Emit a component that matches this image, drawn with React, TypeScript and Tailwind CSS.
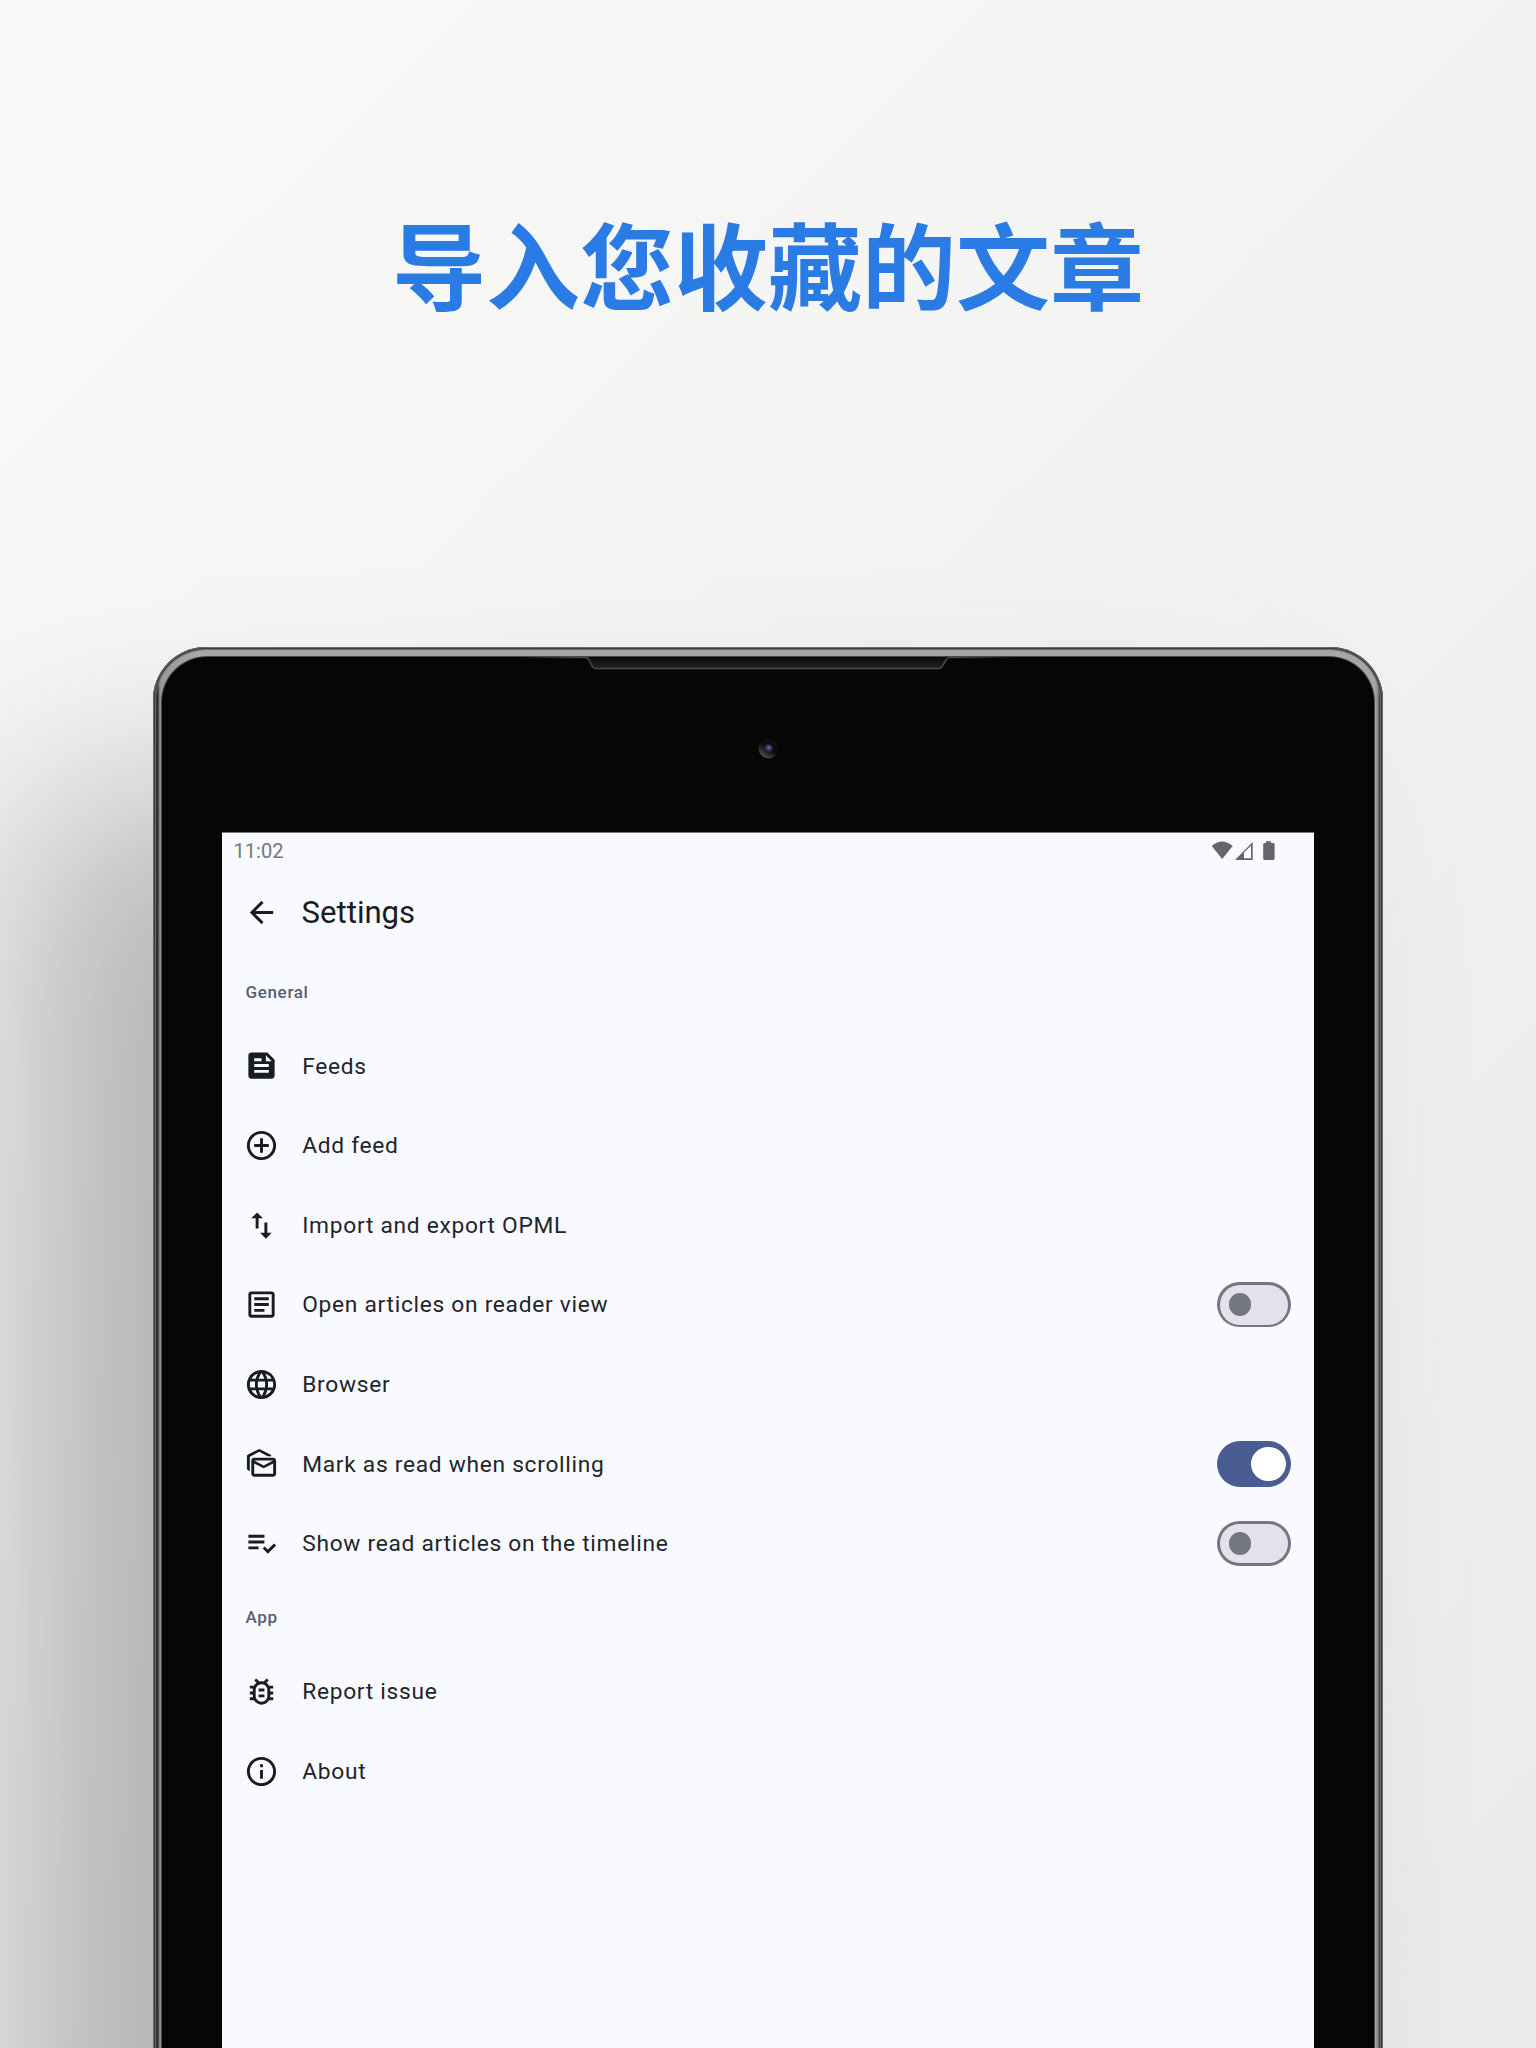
import type { ReactNode } from "react";
import {
  MdArrowBack,
  MdFeed,
  MdAddCircleOutline,
  MdImportExport,
  MdOutlineArticle,
  MdLanguage,
  MdOutlineMarkAsUnread,
  MdPlaylistAddCheck,
  MdOutlineBugReport,
  MdOutlineInfo,
} from "react-icons/md";

type Item = { icon: ReactNode; label: string; toggle?: boolean };

const iconClass = "size-[35px] shrink-0";

const general: Item[] = [
  { icon: <MdFeed className={iconClass} />, label: "Feeds" },
  { icon: <MdAddCircleOutline className={iconClass} />, label: "Add feed" },
  { icon: <MdImportExport className={iconClass} />, label: "Import and export OPML" },
  { icon: <MdOutlineArticle className={iconClass} />, label: "Open articles on reader view", toggle: false },
  { icon: <MdLanguage className={iconClass} />, label: "Browser" },
  { icon: <MdOutlineMarkAsUnread className={iconClass} />, label: "Mark as read when scrolling", toggle: true },
  { icon: <MdPlaylistAddCheck className={iconClass} />, label: "Show read articles on the timeline", toggle: false },
];

const app: Item[] = [
  { icon: <MdOutlineBugReport className={iconClass} />, label: "Report issue" },
  { icon: <MdOutlineInfo className={iconClass} />, label: "About" },
];

function Toggle({ on }: { on: boolean }) {
  return on ? (
    <div className="flex h-[45.5px] w-[74px] items-center justify-end rounded-full bg-[#495d92] pr-[5.7px]">
      <div className="size-[34.1px] rounded-full bg-white" />
    </div>
  ) : (
    <div className="flex h-[45.5px] w-[74px] items-center rounded-full bg-[#757780] p-[2.84px]">
      <div className="flex h-full w-full items-center rounded-full bg-[#e2e2ec] pl-[8.5px]">
        <div className="size-[22.75px] rounded-full bg-[#757780]" />
      </div>
    </div>
  );
}

function Section({ title, items }: { title: string; items: Item[] }) {
  return (
    <section>
      <h2 className="flex h-[68.27px] items-center pt-[1.4px] pl-[23.5px] text-[17.07px] font-medium tracking-[0.62px] text-[#585e71]">
        {title}
      </h2>
      {items.map((item) => (
        <div key={item.label} className="flex h-[79.64px] items-center pr-[22.8px] pl-[22.1px]">
          {item.icon}
          <span className="ml-[23.1px] flex-1 pt-[1.6px] text-[22.75px] tracking-[0.71px] text-[#22242b]">{item.label}</span>
          {item.toggle !== undefined && <Toggle on={item.toggle} />}
        </div>
      ))}
    </section>
  );
}

function StatusIcons() {
  return (
    <svg className="mt-px" width="66" height="22" viewBox="0 0 66 22" fill="#666669">
      <path d="M0.7 6 Q11 -3 21.7 6 L11.2 19 Z" />
      <path fillRule="evenodd" d="M24 20 L41.7 2 V20 Z M33 12.6 V18.3 H40 V5.8 Z" />
      <path d="M55 1.3 h5 v1.7 h2.2 q1.4 0 1.4 1.4 v14 q0 1.6 -1.4 1.6 h-8.4 q-1.6 0 -1.6 -1.6 v-14 q0 -1.4 1.4 -1.4 h1.4 z" />
    </svg>
  );
}

function Speaker() {
  return (
    <svg className="absolute top-[8px] left-[368px]" width="492" height="16" viewBox="0 0 492 16" fill="none">
      <defs>
        <linearGradient id="slot" x1="0" y1="0" x2="0" y2="1">
          <stop offset="0" stopColor="#0a0a0a" />
          <stop offset="1" stopColor="#222222" />
        </linearGradient>
        <linearGradient id="lip" x1="0" x2="1" y1="0" y2="0">
          <stop offset="0" stopColor="#555555" stopOpacity="0" />
          <stop offset="0.12" stopColor="#4a4a4a" />
          <stop offset="0.88" stopColor="#4a4a4a" />
          <stop offset="1" stopColor="#555555" stopOpacity="0" />
        </linearGradient>
      </defs>
      <path d="M66 2 L72 13 H420 L426 2 Z" fill="url(#slot)" />
      <path
        d="M0 2.5 H64 Q67 2.5 68 5 L71 11 Q72 13.4 74 13.4 H418 Q420 13.4 421.5 11 L425 5 Q426.5 2.5 429 2.5 H490"
        stroke="url(#lip)"
        strokeWidth="1.5"
      />
    </svg>
  );
}

function Camera() {
  return (
    <svg className="absolute top-[91px] left-[605px]" width="22" height="22" viewBox="0 0 22 22">
      <defs>
        <linearGradient id="ring" x1="0.25" y1="0.9" x2="0.5" y2="0.5">
          <stop offset="0" stopColor="#4b4b4b" />
          <stop offset="1" stopColor="#0d0d0d" />
        </linearGradient>
        <radialGradient id="lens" cx="0.55" cy="0.4" r="0.6">
          <stop offset="0" stopColor="#70709c" />
          <stop offset="0.5" stopColor="#34345e" />
          <stop offset="1" stopColor="#15152a" />
        </radialGradient>
      </defs>
      <circle cx="10.5" cy="10.5" r="10" fill="url(#ring)" />
      <circle cx="10.5" cy="10.5" r="4.2" fill="url(#lens)" />
    </svg>
  );
}

export default function App() {
  return (
    <div className="flex h-[2048px] w-[1536px] flex-col overflow-hidden bg-[linear-gradient(135deg,#fafafa_0%,#f3f3f2_40%,#ebeae8_100%)] font-[Roboto,sans-serif] text-[#191c20]">
      <header className="flex h-[647px] w-full shrink-0 justify-center pt-[192px]">
        <h1 className="h-[140px] text-[94px] leading-[140px] font-bold whitespace-nowrap text-[#2b7be4] [font-family:'Noto_Sans_CJK_SC',sans-serif]">
          导入您收藏的文章
        </h1>
      </header>

      <div className="relative ml-[153px] h-[1600px] w-[1229.5px] shrink-0 rounded-[53px] bg-[linear-gradient(90deg,#2c2c2c_5px,#777_6px,#999_8px,#a6a6a6_40px,#a6a6a6_1222px,#888_1225px,#222_1227px)] pt-[9.5px] pr-[8.5px] pl-[9px] shadow-[inset_0_0_0_1px_#6a6a6a,inset_0_0_1px_2px_#333333,inset_0_0_1px_3px_#777777,-134px_146px_210px_rgba(0,0,0,0.26)]">
        <div className="h-[1600px] rounded-t-[45px] bg-[#060606] pt-[175.5px] pl-[60px] shadow-[0_0_0_1px_#4a4a4a]">
          <Speaker />
          <Camera />
          <main className="h-full w-[1092px] border-t border-[#77777b] bg-[#f9faff]">
            <div className="flex h-[34.13px] items-center justify-between pr-[37px] pl-[11.5px] text-[20.1px] text-[#77777b]">
              <span className="pt-[2px]">11:02</span>
              <StatusIcons />
            </div>
            <div className="flex h-[90.6px] items-center pl-[22.1px]">
              <MdArrowBack className={iconClass} />
              <h1 className="ml-[22.5px] pt-[1.4px] text-[31.1px]">Settings</h1>
            </div>
            <Section title="General" items={general} />
            <Section title="App" items={app} />
          </main>
        </div>
      </div>
    </div>
  );
}
